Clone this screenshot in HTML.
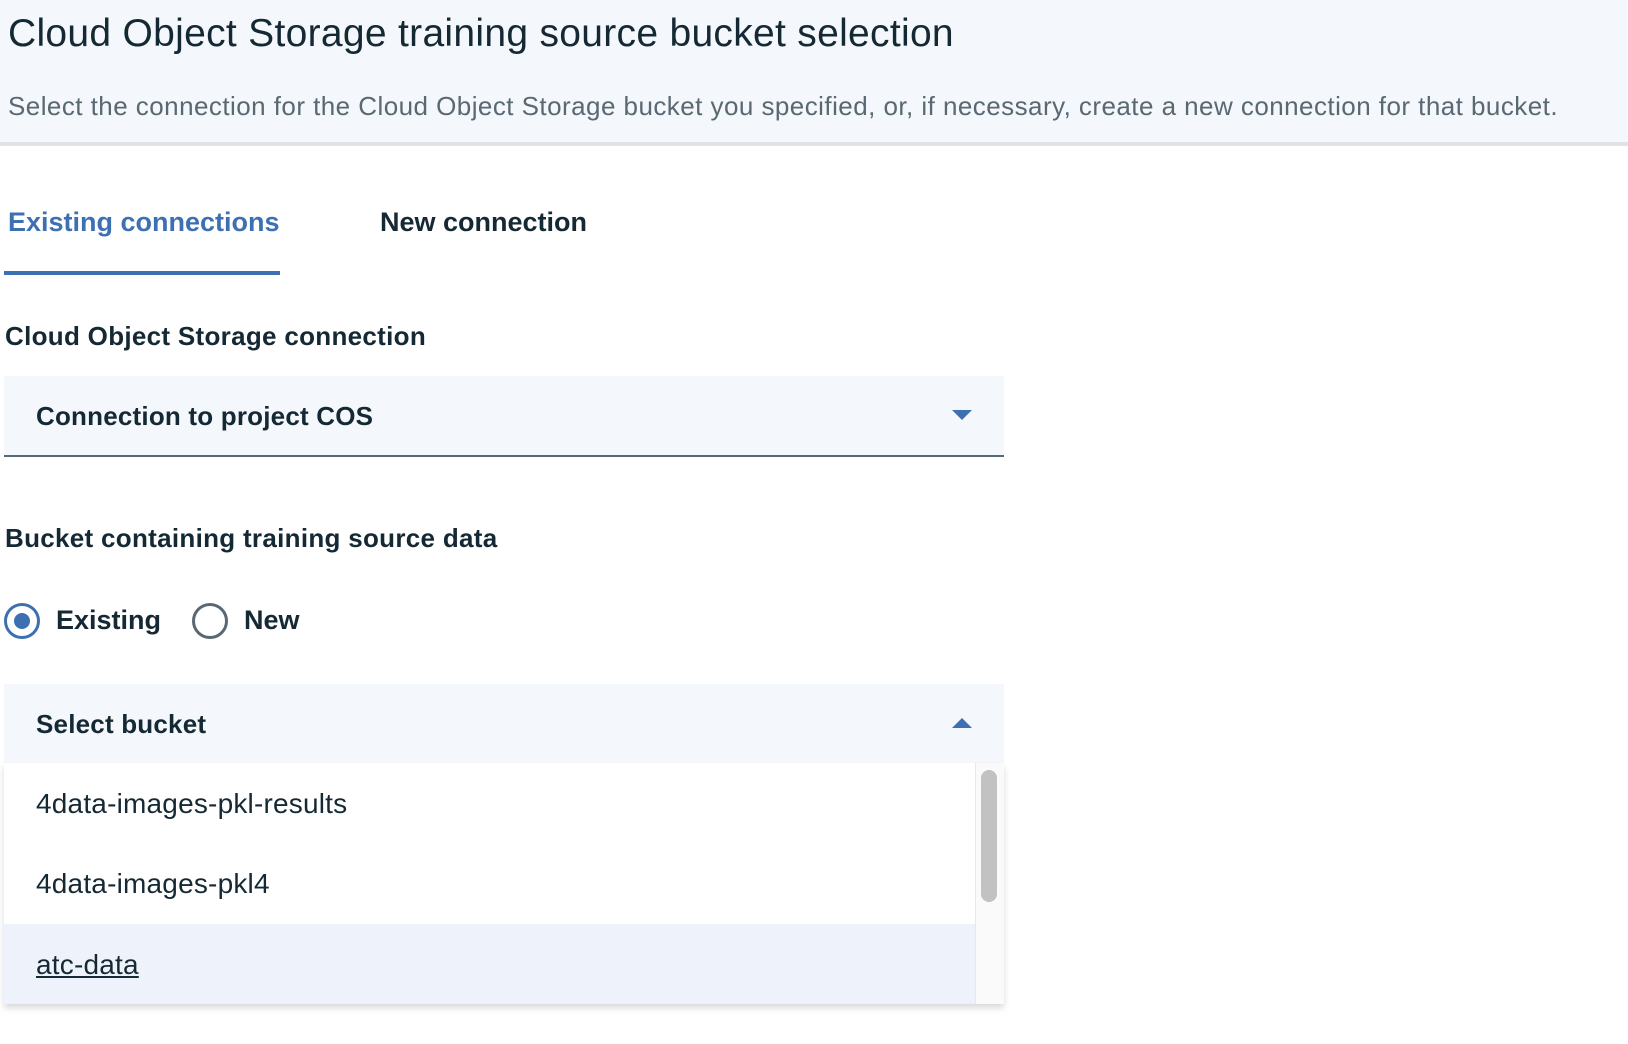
<!DOCTYPE html>
<html><head><meta charset="utf-8"><style>
*{margin:0;padding:0;box-sizing:border-box}
body{width:1628px;height:1044px;background:#fff;font-family:"Liberation Sans",sans-serif;color:#152934;position:relative;overflow:hidden}
.hdr{position:absolute;left:0;top:0;width:1628px;height:146px;background:#f4f7fb;border-bottom:4px solid #dfe3e6}
.t{position:absolute;left:8px;top:12px;font-size:39px;white-space:nowrap;color:#152934;letter-spacing:0.3px}
.s{position:absolute;left:8px;top:91px;font-size:26px;color:#5a6872;white-space:nowrap;letter-spacing:0.45px}
.tab{position:absolute;top:207px;font-size:27px;font-weight:bold;white-space:nowrap}
.ul{position:absolute;left:4px;top:271px;width:276px;height:4px;background:#3d70b2}
.lbl{position:absolute;left:5px;font-size:26px;font-weight:bold;white-space:nowrap;letter-spacing:0.3px}
.dd{position:absolute;left:4px;width:1000px;background:#f4f7fb}
.dd span{position:absolute;left:32px;font-size:26px;font-weight:bold;letter-spacing:0.2px}
.radio{position:absolute;top:603px;width:36px;height:36px;border-radius:50%;border:3px solid #5a6872}
.rt{position:absolute;top:605px;font-size:27px;font-weight:bold}
.item{position:absolute;left:4px;width:971px;height:80px;font-size:28px}
.item span{position:absolute;left:32px;top:25px;letter-spacing:0.2px}
</style></head><body>
<div class="hdr"></div>
<div class="t">Cloud Object Storage training source bucket selection</div>
<div class="s">Select the connection for the Cloud Object Storage bucket you specified, or, if necessary, create a new connection for that bucket.</div>
<div class="tab" style="left:8px;color:#3d70b2">Existing connections</div>
<div class="tab" style="left:380px">New connection</div>
<div class="ul"></div>
<div class="lbl" style="top:321px">Cloud Object Storage connection</div>
<div class="dd" style="top:376px;height:81px;border-bottom:2px solid #5a6872"><span style="top:25px">Connection to project COS</span>
<svg style="position:absolute;left:948px;top:34px" width="20" height="12"><polygon points="0,0 20,0 10,10" fill="#3d70b2"/></svg></div>
<div class="lbl" style="top:523px">Bucket containing training source data</div>
<div class="radio" style="left:4px;border-color:#3d70b2"><div style="position:absolute;left:7px;top:7px;width:16px;height:16px;border-radius:50%;background:#3d70b2"></div></div>
<div class="rt" style="left:56px">Existing</div>
<div class="radio" style="left:192px"></div>
<div class="rt" style="left:244px">New</div>
<div class="dd" style="top:684px;height:79px"><span style="top:25px">Select bucket</span>
<svg style="position:absolute;left:948px;top:34px" width="20" height="12"><polygon points="0,10 20,10 10,0" fill="#3d70b2"/></svg></div>
<div style="position:absolute;left:4px;top:763px;width:1000px;height:241px;background:#fff;box-shadow:0 4px 6px rgba(0,0,0,0.15)"></div>
<div class="item" style="top:763px"><span>4data-images-pkl-results</span></div>
<div class="item" style="top:843px"><span>4data-images-pkl4</span></div>
<div class="item" style="top:924px;background:#eef3fb"><span style="text-decoration:underline">atc-data</span></div>
<div style="position:absolute;left:975px;top:763px;width:29px;height:241px;background:#fafafa;border-left:1px solid #e8e8e8"></div>
<div style="position:absolute;left:981px;top:770px;width:16px;height:132px;border-radius:8px;background:#c2c2c2"></div>
</body></html>
